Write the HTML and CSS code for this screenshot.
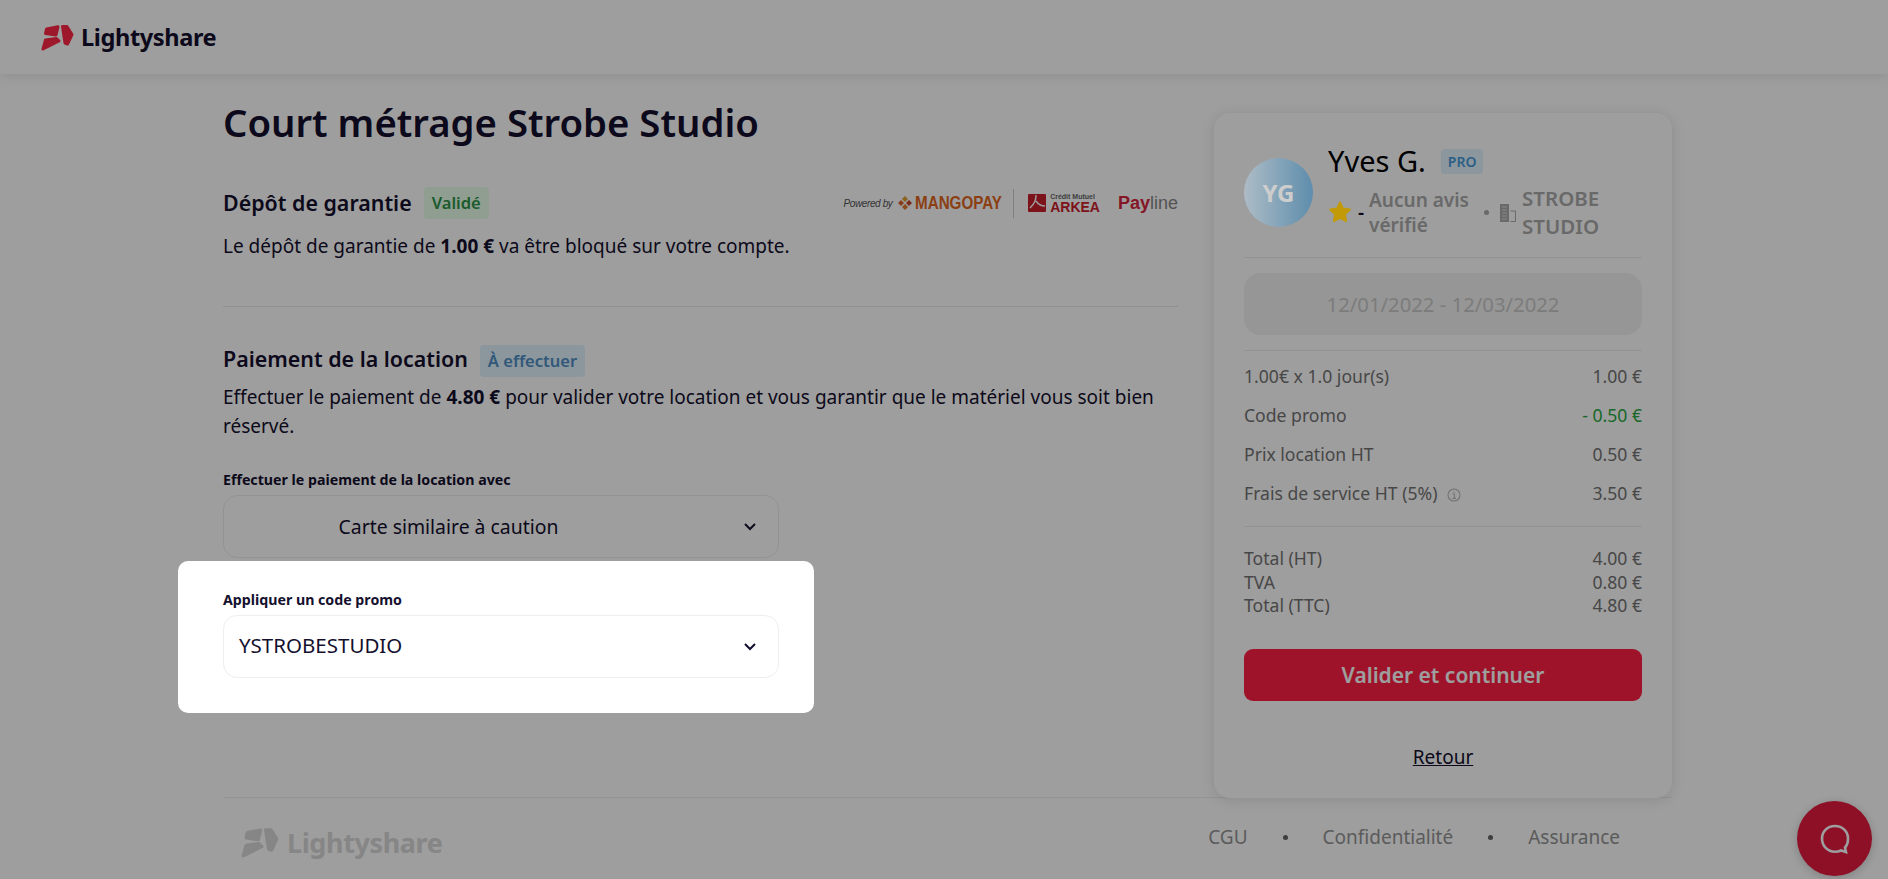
FILE: index.html
```html
<!DOCTYPE html>
<html lang="fr">
<head>
    <meta charset="UTF-8">
    <title>Lightyshare - Paiement</title>
    <link rel="stylesheet" href="styles.css">
</head>
<body>
    <header class="topbar">
        <svg class="logo" viewBox="0 0 33 27"><path d="M5.5 5 L17 2.8 L15 11 L4.5 9.5 Z"/><path d="M21.5 2.5 L26 2.5 L31 10.5 L26.5 20 L24 19 Z"/><path d="M2 25 L4.5 16 L15.5 14.5 L18 17 Z"/></svg>
        <span class="brand">Lightyshare</span>
    </header>

    <div class="page">
        <main class="main">
            <h1>Court métrage Strobe Studio</h1>

            <section class="deposit">
                <div class="deposit-head">
                    <h2>Dépôt de garantie</h2>
                    <span class="badge badge-green">Validé</span>
                    <div class="partners">
                        <span class="powered">Powered by</span>
                        <svg class="mango-icon" viewBox="0 0 14 14"><path d="M7 0 L10 3 L7 6 L4 3 Z" fill="#e0a030"/><path d="M0 7 L3 4 L6 7 L3 10 Z" fill="#d9662a"/><path d="M14 7 L11 4 L8 7 L11 10 Z" fill="#c9472a"/><path d="M7 14 L10 11 L7 8 L4 11 Z" fill="#e07a30"/></svg>
                        <span class="mangopay">MANGOPAY</span>
                        <span class="partner-sep"></span>
                        <svg class="arkea-icon" viewBox="0 0 18 18"><rect width="18" height="18" rx="1" fill="#c8202a"/><path d="M8 1 C8 6 7 9 2 14 M8 7 C10 10 13 12 17 12" stroke="#fff" stroke-width="1.4" fill="none"/></svg>
                        <span class="arkea"><small>Crédit Mutuel</small>ARKEA</span>
                        <span class="payline"><b>Pay</b>line</span>
                    </div>
                </div>
                <p>Le dépôt de garantie de <strong>1.00 €</strong> va être bloqué sur votre compte.</p>
            </section>

            <section class="payment">
                <div class="payment-head">
                    <h2>Paiement de la location</h2>
                    <span class="badge badge-blue">À effectuer</span>
                </div>
                <p>Effectuer le paiement de <strong>4.80 €</strong> pour valider votre location et vous garantir que le matériel vous soit bien réservé.</p>

                <label class="field-label">Effectuer le paiement de la location avec</label>
                <div class="select select-center">
                    <span>Carte similaire à caution</span>
                    <svg class="chevron" viewBox="0 0 14 9"><path d="M2 2 L7 7 L12 2"/></svg>
                </div>

                <div class="promo">
                    <label class="field-label">Appliquer un code promo</label>
                    <div class="select">
                        <span class="promo-code">YSTROBESTUDIO</span>
                        <svg class="chevron" viewBox="0 0 14 9"><path d="M2 2 L7 7 L12 2"/></svg>
                    </div>
                </div>
            </section>
        </main>

        <aside class="card">
            <div class="owner">
                <div class="avatar">YG</div>
                <div class="owner-info">
                    <div class="owner-name">Yves G. <span class="badge-pro">PRO</span></div>
                    <div class="owner-meta">
                        <svg class="star" viewBox="0 0 24 24"><path d="M12 2.5 L15 8.6 L21.8 9.6 L16.9 14.4 L18.1 21 L12 17.8 L5.9 21 L7.1 14.4 L2.2 9.6 L9 8.6 Z"/></svg>
                        <span class="dash">-</span>
                        <span class="reviews">Aucun avis vérifié</span>
                        <span class="dot"></span>
                        <svg class="building" viewBox="0 0 16 19"><path d="M0 1 H9 V19 H0 Z" fill="#aaa"/><path d="M10.5 8 H15.5 V18.5 H10.5" fill="none" stroke="#aaa"/><path d="M2 4 H7 M2 7 H7 M2 10 H7 M2 13 H7 M2 16 H7" stroke="#ddd"/></svg>
                        <span class="company">STROBE STUDIO</span>
                    </div>
                </div>
            </div>

            <div class="dates">12/01/2022 - 12/03/2022</div>

            <div class="lines">
                <div class="line"><span>1.00€ x 1.0 jour(s)</span><span>1.00 €</span></div>
                <div class="line"><span>Code promo</span><span class="discount">- 0.50 €</span></div>
                <div class="line"><span>Prix location HT</span><span>0.50 €</span></div>
                <div class="line"><span>Frais de service HT (5%) <svg class="info" viewBox="0 0 14 14"><circle cx="7" cy="7" r="6"/><path d="M5.5 6 H7.4 V10.4 M5.4 10.4 H9 M7 3.4 V4.4"/></svg></span><span>3.50 €</span></div>
            </div>

            <div class="totals">
                <div class="total"><span>Total (HT)</span><span>4.00 €</span></div>
                <div class="total"><span>TVA</span><span>0.80 €</span></div>
                <div class="total"><span>Total (TTC)</span><span>4.80 €</span></div>
            </div>

            <button class="submit">Valider et continuer</button>
            <a class="back" href="#">Retour</a>
        </aside>
    </div>

    <footer class="footer">
        <div class="footer-brand">
            <svg class="logo-grey" viewBox="0 0 33 27"><path d="M5.5 5 L17 2.8 L15 11 L4.5 9.5 Z"/><path d="M21.5 2.5 L26 2.5 L31 10.5 L26.5 20 L24 19 Z"/><path d="M2 25 L4.5 16 L15.5 14.5 L18 17 Z"/></svg>
            <span>Lightyshare</span>
        </div>
        <nav class="footer-links">
            <a>CGU</a><i></i><a>Confidentialité</a><i></i><a>Assurance</a>
        </nav>
    </footer>

    <div class="overlay"></div>

    <div class="chat">
        <svg viewBox="0 0 32 32"><path d="M16 3 C23.5 3 29 8.5 29 15.5 C29 19.5 28 22.5 26 24.5 L27 29 L22 27.5 C20.3 28.3 18.3 28.8 16 28.8 C8.5 28.8 3 23 3 15.5 C3 8.5 8.5 3 16 3 Z"/></svg>
    </div>
</body>
</html>
```

FILE: styles.css
```css
* {
    box-sizing: border-box;
}
html, body {
    margin: 0;
    height: 879px;
    overflow: hidden;
}
body {
    font-family: "Noto Sans", "Open Sans", Arial, sans-serif;
    color: #14102e;
    background-color: #fff;
    font-size: 19px;
}

/* overlay */
.overlay {
    position: fixed;
    inset: 0;
    background-color: rgba(0, 0, 0, 0.38);
    z-index: 10;
}

/* header */
.topbar {
    height: 74px;
    display: flex;
    align-items: center;
    padding-left: 41px;
    box-shadow: 0 2px 12px rgba(0, 0, 0, 0.1);
}
.logo {
    width: 33px;
    height: 27px;
    fill: #ff2747;
    stroke: #ff2747;
    stroke-width: 3;
    stroke-linejoin: round;
}
.brand {
    margin-left: 7px;
    font-size: 23.6px;
    font-weight: 700;
    letter-spacing: -0.4px;
}

.page {
    display: flex;
    padding: 25px 216px 0 223px;
    justify-content: space-between;
}
.main {
    width: 955px;
}
h1 {
    margin: 0;
    font-size: 38.3px;
    line-height: 46px;
    font-weight: 600;
}
h2 {
    margin: 0;
    font-size: 21.4px;
    font-weight: 600;
    line-height: 30px;
}

.deposit {
    margin-top: 42px;
    padding-bottom: 45px;
    border-bottom: 1px solid #e8e8e8;
}
.deposit-head {
    display: flex;
    align-items: center;
    height: 32px;
}
.deposit p {
    margin: 13px 0 0;
    line-height: 29px;
}
.payment {
    margin-top: 38px;
    position: relative;
}
.payment-head {
    display: flex;
    align-items: center;
    height: 32px;
}
.payment-head h2 {
    margin-top: -4px;
}
.payment p {
    margin: 6px 0 0;
    line-height: 29px;
}
strong {
    font-weight: 700;
}

.badge {
    margin-left: 12px;
    padding: 0 8px;
    border-radius: 4px;
    font-size: 16.5px;
    font-weight: 600;
    line-height: 32px;
}
.badge-green {
    color: #2d9447;
    background-color: #e8ffec;
}
.badge-blue {
    color: #4f8fc4;
    background-color: #e1f3fe;
}

/* partner logos */
.partners {
    margin-left: auto;
    display: flex;
    align-items: center;
}
.powered {
    font-family: "Liberation Sans", sans-serif;
    font-size: 10px;
    font-style: italic;
    letter-spacing: -0.4px;
    color: #555;
}
.mango-icon {
    width: 14px;
    height: 14px;
    margin: 0 3px 0 6px;
}
.mangopay {
    display: inline-block;
    margin-right: -22px;
    transform: scaleX(0.8);
    transform-origin: left;
    font-family: "Liberation Sans", sans-serif;
    font-size: 19px;
    font-weight: 700;
    color: #e2661f;
}
.partner-sep {
    width: 1px;
    height: 29px;
    margin: 0 14px 0 11px;
    background-color: #ccc;
}
.arkea-icon {
    width: 18px;
    height: 18px;
}
.arkea {
    margin-left: 4px;
    display: flex;
    flex-direction: column;
    font-family: "Liberation Sans", sans-serif;
    font-size: 14px;
    line-height: 12px;
    font-weight: 700;
    color: #c8202a;
}
.arkea small {
    font-size: 7px;
    line-height: 8px;
    color: #666;
}
.payline {
    margin-left: 18px;
    font-family: "Liberation Sans", sans-serif;
    font-size: 18px;
    color: #888;
}
.payline b {
    font-weight: 700;
    color: #d5243c;
}

/* selects */
.field-label {
    display: block;
    margin-top: 29px;
    font-size: 14.2px;
    font-weight: 700;
    line-height: 19px;
}
.select {
    position: relative;
    width: 556px;
    height: 63px;
    margin-top: 6px;
    padding: 0 15px;
    display: flex;
    align-items: center;
    border: 1px solid #eee;
    border-radius: 14px;
    font-size: 19.4px;
    background-color: #fff;
}
.select-center {
    justify-content: center;
    padding-right: 120px;
}
.promo-code {
    padding-bottom: 3px;
    font-size: 20.5px;
}
.chevron {
    position: absolute;
    right: 21px;
    top: 26px;
    width: 14px;
    height: 9px;
    fill: none;
    stroke: #14102e;
    stroke-width: 2;
}
.promo {
    position: absolute;
    z-index: 20;
    left: -45px;
    top: 216px;
    width: 636px;
    height: 152px;
    padding: 15px 45px 0;
    background-color: #fff;
    border-radius: 10px;
}
.promo .field-label {
    margin-top: 14px;
}

/* right card */
.card {
    width: 458px;
    height: 685px;
    margin-top: 14px;
    padding: 0 30px;
    border-radius: 16px;
    box-shadow: 0 2px 14px rgba(0, 0, 0, 0.12);
    background-color: #fff;
    display: flex;
    flex-direction: column;
}
.owner {
    height: 145px;
    display: flex;
    align-items: flex-start;
    padding-top: 45px;
    border-bottom: 1px solid #eee;
}
/* avatar and star stay bright above the overlay */
.avatar {
    flex: none;
    position: relative;
    z-index: 15;
    width: 69px;
    height: 69px;
    border-radius: 50%;
    display: flex;
    align-items: center;
    justify-content: center;
    color: #cdcdcd;
    font-size: 24px;
    font-weight: 700;
    background: linear-gradient(90deg, #adbcc6, #5e8dac);
}
.owner-info {
    margin: -16px 0 0 15px;
    flex: 1;
}
.owner-name {
    font-size: 29px;
    line-height: 38px;
    color: #000;
    display: flex;
    align-items: center;
    gap: 15px;
}
.badge-pro {
    padding: 0 7px;
    font-size: 14px;
    font-weight: 600;
    line-height: 25px;
    border-radius: 4px;
    color: #4a9ad8;
    background-color: #e1f3fe;
}
.owner-meta {
    display: flex;
    align-items: center;
    margin-top: 4px;
    color: #aaa;
    font-weight: 600;
}
.star {
    position: relative;
    z-index: 15;
    width: 24px;
    height: 24px;
    fill: #c29a08;
    stroke: #c29a08;
    stroke-width: 2;
    stroke-linejoin: round;
}
.dash {
    margin-left: 6px;
    color: #14102e;
}
.reviews {
    width: 112px;
    margin-left: 5px;
    padding-top: 2px;
    font-size: 19px;
    line-height: 25px;
}
.dot {
    width: 5px;
    height: 5px;
    margin-left: 3px;
    border-radius: 50%;
    background-color: #aaa;
}
.building {
    width: 16px;
    height: 19px;
    margin-left: 11px;
}
.company {
    width: 110px;
    margin-left: 6px;
    font-size: 20.5px;
    line-height: 28px;
}
.dates {
    margin-top: 15px;
    height: 62px;
    display: flex;
    align-items: center;
    justify-content: center;
    border-radius: 16px;
    background-color: #f3f3f3;
    color: #c8c8c8;
    font-size: 20.3px;
}
.lines {
    margin-top: 15px;
    padding: 6px 0 13px;
    border-top: 1px solid #eee;
    border-bottom: 1px solid #eee;
}
.line {
    display: flex;
    justify-content: space-between;
    height: 39px;
    line-height: 39px;
    font-size: 17.6px;
    color: #737373;
}
.discount {
    color: #28a941;
}
.info {
    width: 14px;
    height: 14px;
    margin-left: 5px;
    vertical-align: -2px;
    fill: none;
    stroke: #bbb;
    stroke-width: 1.1;
}
.totals {
    padding-top: 20px;
}
.total {
    display: flex;
    justify-content: space-between;
    height: 23.5px;
    line-height: 23.5px;
    font-size: 17.6px;
    color: #737373;
}
.submit {
    margin-top: 31px;
    height: 52px;
    flex: none;
    border: none;
    border-radius: 9px;
    color: #fff;
    font-family: inherit;
    font-size: 21px;
    font-weight: 600;
    background-color: #ff2044;
}
.back {
    margin-top: 43px;
    text-align: center;
    font-size: 19px;
    color: #14102e;
}

/* footer */
.footer {
    margin: -1px 0 0 223px;
    width: 1449px;
    border-top: 1px solid #eee;
    display: flex;
    justify-content: space-between;
    padding: 26px 52px 0 18px;
}
.footer-brand {
    display: flex;
    align-items: center;
    color: #d8d8d8;
    font-size: 27px;
    font-weight: 700;
    letter-spacing: -0.4px;
}
.logo-grey {
    width: 38px;
    height: 31px;
    margin-right: 8px;
    fill: #d8d8d8;
    stroke: #d8d8d8;
    stroke-width: 3;
    stroke-linejoin: round;
}
.footer-links {
    display: flex;
    align-items: center;
    gap: 35px;
    height: 26px;
    font-size: 19px;
    color: #949494;
}
.footer-links i {
    width: 5px;
    height: 5px;
    border-radius: 50%;
    background-color: #666;
}

/* chat bubble */
.chat {
    position: fixed;
    z-index: 5;
    right: 16px;
    bottom: 3px;
    width: 75px;
    height: 75px;
    border-radius: 50%;
    background-color: #e61b40;
    display: flex;
    align-items: center;
    justify-content: center;
    box-shadow: 0 2px 10px rgba(0, 0, 0, 0.2);
}
.chat svg {
    width: 32px;
    height: 32px;
    fill: none;
    stroke: #fff;
    stroke-width: 2.6;
}
```
